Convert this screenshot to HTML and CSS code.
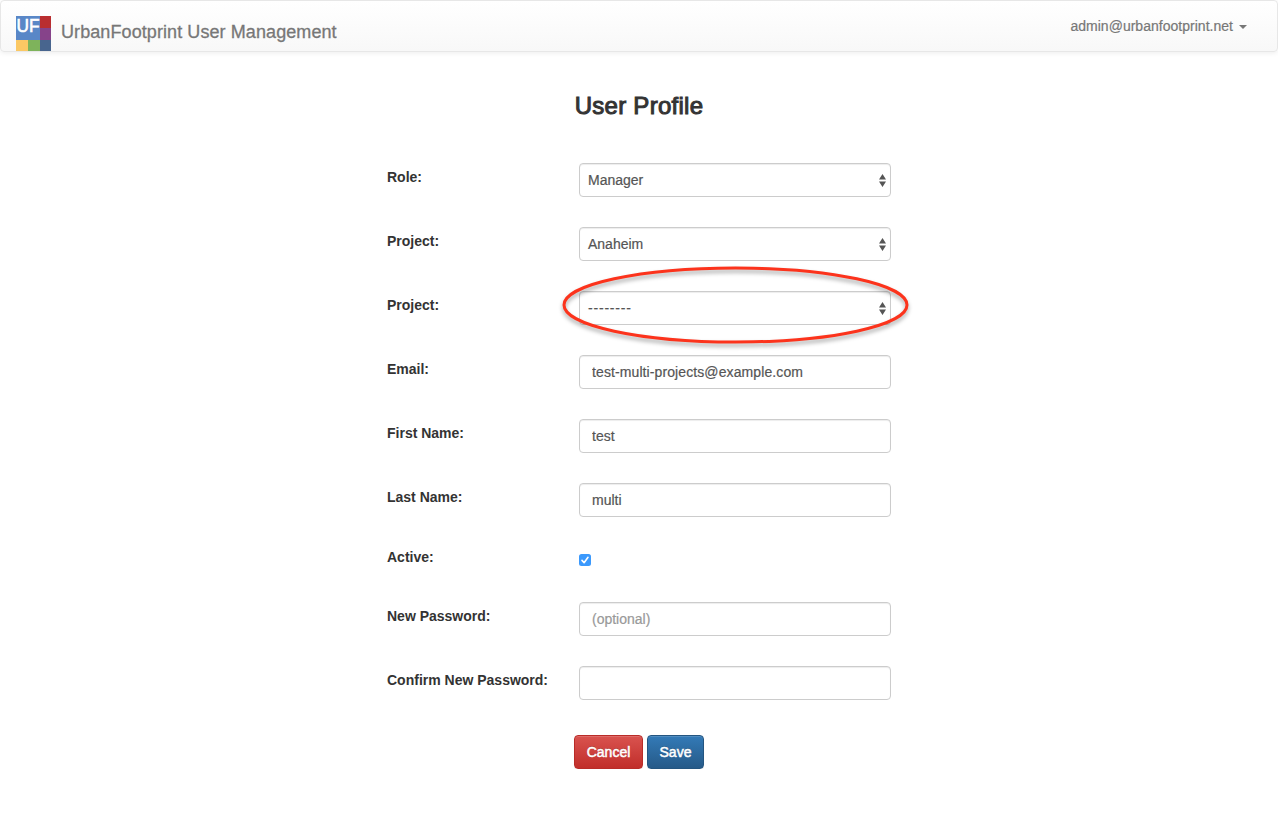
FILE: index.html
```html
<!DOCTYPE html>
<html lang="en">
<head>
<meta charset="utf-8">
<title>UrbanFootprint User Management</title>
<link rel="stylesheet" href="styles.css">
</head>
<body>
<nav class="navbar">
  <a class="brand">
    <span class="logo">
      <svg width="35" height="35" viewBox="0 0 35 35" shape-rendering="crispEdges">
        <rect width="24" height="24" fill="#5987c7"/>
        <rect x="24" width="11" height="12" fill="#b92e30"/>
        <rect x="24" y="12" width="11" height="12" fill="#86438a"/>
        <rect y="24" width="12" height="11" fill="#fbc864"/>
        <rect x="12" y="24" width="12" height="11" fill="#7eb35b"/>
        <rect x="24" y="24" width="11" height="11" fill="#48658e"/>
        <text class="logo-text" x="0.5" y="15.5" textLength="23" lengthAdjust="spacingAndGlyphs">UF</text>
      </svg>
    </span>
    <span class="brand-name">UrbanFootprint User Management</span>
  </a>
  <a class="account"><span class="account-name">admin@urbanfootprint.net</span><span class="caret"></span></a>
</nav>
<main class="page">
  <h1 class="title">User Profile</h1>
  <form class="form">
    <div class="row">
      <label class="label">Role:</label>
      <div class="control select"><span class="value">Manager</span><svg class="arrows" width="7" height="13" viewBox="0 0 7 13"><path d="M3.5 0 7 5.5H0zM0 7.5h7L3.5 13z"/></svg></div>
    </div>
    <div class="row">
      <label class="label">Project:</label>
      <div class="control select"><span class="value">Anaheim</span><svg class="arrows" width="7" height="13" viewBox="0 0 7 13"><path d="M3.5 0 7 5.5H0zM0 7.5h7L3.5 13z"/></svg></div>
    </div>
    <div class="row">
      <label class="label">Project:</label>
      <div class="control select"><span class="value dashes">--------</span><svg class="arrows" width="7" height="13" viewBox="0 0 7 13"><path d="M3.5 0 7 5.5H0zM0 7.5h7L3.5 13z"/></svg>
        <svg class="highlight" width="356" height="88" viewBox="0 0 356 88"><ellipse cx="176.5" cy="40" rx="171.5" ry="37"/></svg>
      </div>
    </div>
    <div class="row">
      <label class="label">Email:</label>
      <input class="control email" type="text" value="test-multi-projects@example.com">
    </div>
    <div class="row">
      <label class="label">First Name:</label>
      <input class="control" type="text" value="test">
    </div>
    <div class="row">
      <label class="label">Last Name:</label>
      <input class="control" type="text" value="multi">
    </div>
    <div class="row row-check">
      <label class="label">Active:</label>
      <span class="checkbox"><svg width="12" height="12" viewBox="0 0 12 12"><path d="M3 6.4 5.1 8.7 9 3.3"/></svg></span>
    </div>
    <div class="row">
      <label class="label">New Password:</label>
      <input class="control" type="password" placeholder="(optional)">
    </div>
    <div class="row">
      <label class="label">Confirm New Password:</label>
      <input class="control" type="password">
    </div>
  </form>
  <div class="actions">
    <button class="btn cancel">Cancel</button>
    <button class="btn save">Save</button>
  </div>
</main>
</body>
</html>
```

FILE: styles.css
```css
* { box-sizing: border-box; }
body {
  margin: 0;
  background: #fff;
  color: #333;
  font: 14px/20px "Liberation Sans", Arial, sans-serif;
}
.navbar {
  display: flex;
  justify-content: space-between;
  height: 52px;
  padding: 15px 30px 0 15px;
  border: 1px solid #e7e7e7;
  border-radius: 4px;
  background: linear-gradient(#fff, #f8f8f8);
  box-shadow: inset 0 1px 0 rgba(255,255,255,.15), 0 1px 5px rgba(0,0,0,.075);
  color: #777;
}
.brand { display: flex; gap: 10px; height: 35px; }
.logo svg { display: block; }
.logo-text { font: 18px "Liberation Sans", Arial, sans-serif; fill: #fff; stroke: #fff; stroke-width: .6; }
.brand-name { font-size: 18px; line-height: 32px; letter-spacing: .085px; -webkit-text-stroke: .3px #777; }
.account { display: flex; gap: 6px; }
.account-name { letter-spacing: .02px; -webkit-text-stroke: .2px #777; }
.caret {
  width: 8px;
  height: 4px;
  margin-top: 9px;
  border-top: 4px solid #777;
  border-left: 4px solid transparent;
  border-right: 4px solid transparent;
}
.page { display: flex; flex-direction: column; align-items: center; }
.title {
  margin: 40px 0 44px;
  font-size: 24px;
  line-height: 27px;
  font-weight: 400;
  letter-spacing: .28px;
  -webkit-text-stroke: 1px #333;
}
.form { display: flex; flex-direction: column; gap: 30px; width: 504px; }
.row { display: grid; grid-template-columns: 192px 312px; height: 34px; }
.row-check { height: 25px; }
.label { padding-top: 4px; font-weight: 700; color: #333; }
.row-check .label { padding-top: 0; }
.control {
  width: 312px;
  height: 34px;
  padding: 6px 12px;
  border: 1px solid #ccc;
  border-radius: 4px;
  outline: 0;
  background: #fff;
  box-shadow: inset 0 1px 1px rgba(0,0,0,.075);
  color: #555;
  font: 14px/20px "Liberation Sans", Arial, sans-serif;
  -webkit-text-stroke: .2px;
}
.control::placeholder { color: #999; opacity: 1; }
.email { letter-spacing: .1px; }
.dashes { letter-spacing: .8px; }
.select {
  position: relative;
  display: flex;
  justify-content: space-between;
  align-items: center;
  padding: 0 4px 0 8px;
}
.arrows { fill: #555; }
.highlight { position: absolute; left: -21px; top: -27px; overflow: visible; filter: drop-shadow(0 3px 2px rgba(0,0,0,.35)); }
.highlight ellipse { fill: none; stroke: #fc331c; stroke-width: 3; }
.checkbox {
  width: 12px;
  height: 12px;
  margin-top: 7px;
  border-radius: 2.5px;
  background: #3b99fc;
}
.checkbox svg { display: block; fill: none; stroke: #fff; stroke-width: 1.6; stroke-linecap: round; stroke-linejoin: round; }
.actions { display: flex; gap: 4px; margin-top: 35px; }
.btn {
  height: 34px;
  padding: 0;
  border: 1px solid;
  border-radius: 4px;
  color: #fff;
  font: 14px/20px "Liberation Sans", Arial, sans-serif;
  -webkit-text-stroke: .5px #fff;
  text-shadow: 0 -1px 0 rgba(0,0,0,.2);
  box-shadow: inset 0 1px 0 rgba(255,255,255,.15), 0 1px 1px rgba(0,0,0,.075);
}
.cancel { width: 69px; border-color: #b92c28; background: linear-gradient(#d9534f, #c12e2a); }
.save { width: 57px; border-color: #245580; background: linear-gradient(#337ab7, #265a88); }
```
